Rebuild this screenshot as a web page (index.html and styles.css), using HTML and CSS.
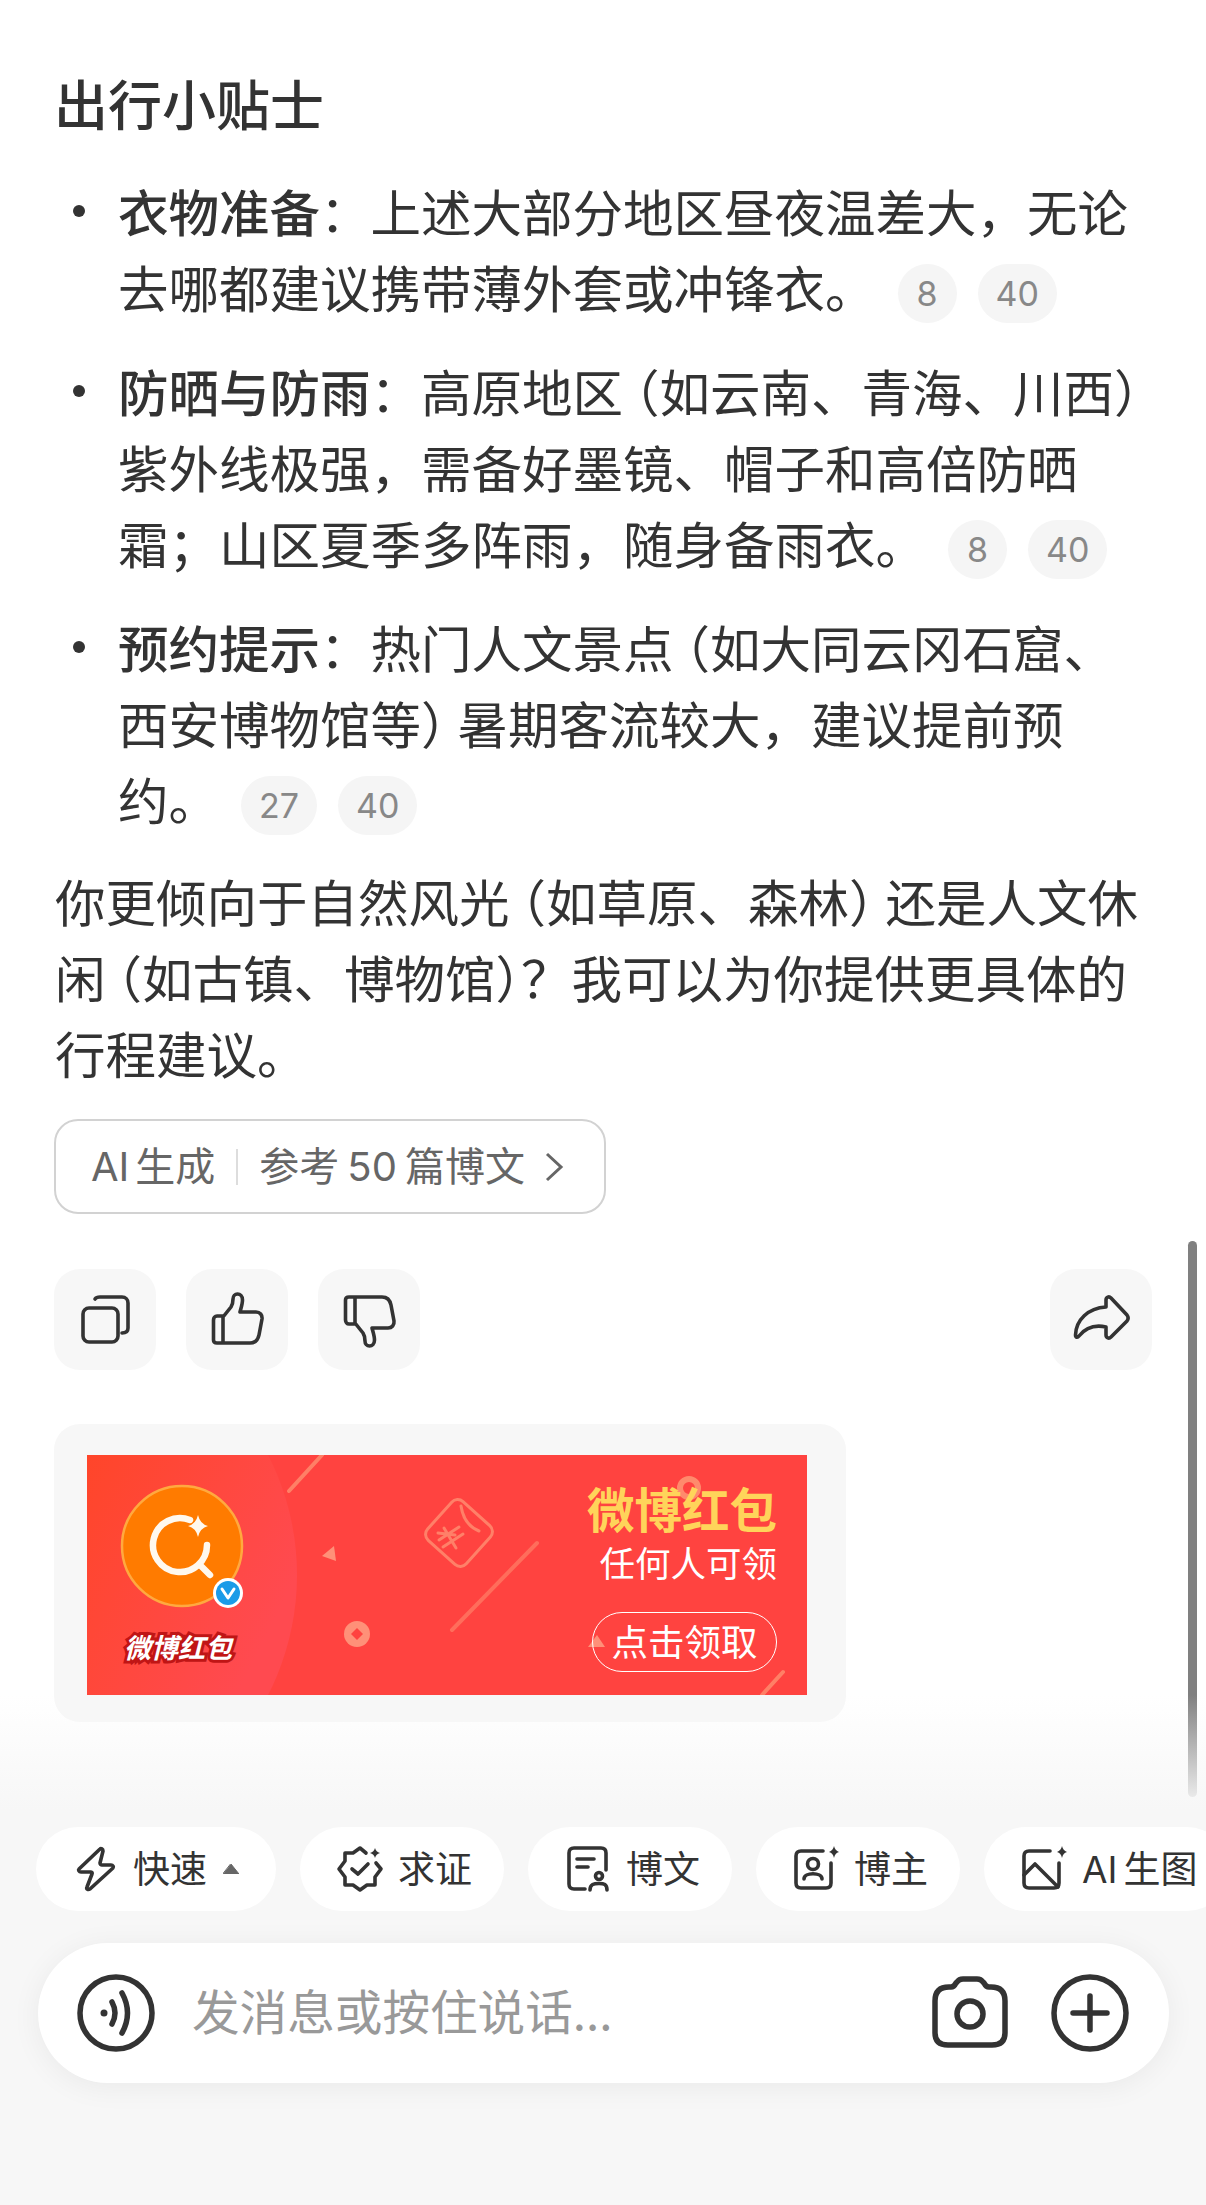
FILE: index.html
```html
<!DOCTYPE html>
<html lang="zh-CN">
<head>
    <meta charset="UTF-8">
    <meta name="viewport" content="width=device-width, initial-scale=1.0">
    <title>微博智搜</title>
    <link rel="stylesheet" href="styles.css">
</head>
<body>
    <div class="page">
        <main class="answer">
            <h2 class="tips-title">出行小贴士</h2>
            <ul class="tips">
                <li><b>衣物准备</b>：上述大部分地区昼夜温差大，无论去哪都建议携带薄外套或冲锋衣。<span class="cite first">8</span><span class="cite">40</span></li>
                <li><b>防晒与防雨</b>：高原地区<span class="lp">（</span>如云南、青海、川西<span class="rp">）</span><br>紫外线极强，需备好墨镜、帽子和高倍防晒霜；山区夏季多阵雨，随身备雨衣。<span class="cite first">8</span><span class="cite">40</span></li>
                <li><b>预约提示</b>：热门人文景点<span class="lp">（</span>如大同云冈石窟、<br>西安博物馆等<span class="rp">）</span>暑期客流较大，建议提前预<br>约。<span class="cite first">27</span><span class="cite">40</span></li>
            </ul>
            <p class="closing">你更倾向于自然风光<span class="lp">（</span>如草原、森林<span class="rp">）</span>还是人文休闲<span class="lp">（</span>如古镇、博物馆<span class="rp tight">）</span>？我可以为你提供更具体的行程建议。</p>

            <div class="source">
                <span class="source-ai">AI<i class="sp small"></i>生成</span>
                <span class="source-sep"></span>
                <span>参考<i class="sp"></i>50<i class="sp"></i>篇博文</span>
                <svg class="source-arrow" viewBox="0 0 20 32"><path d="M3 3 L17 16 L3 29"/></svg>
            </div>

            <div class="actions">
                <button class="action">
                    <svg viewBox="0 0 60 60"><rect x="8" y="18" width="35" height="34" rx="6"/><path d="M20 9 C21 7.5 23 7 25 7 H47 C50.5 7 53 9.5 53 13 V38 C53 41.5 51 43 47 43"/></svg>
                </button>
                <button class="action">
                    <svg viewBox="0 0 60 60"><path d="M16 53 V27 L24 17 C26 14 26 11 26 9 C26 6 28 4 30.5 4 C33 4 35.5 6 35.5 10 C35.5 14 34 18 33 22 H49 C53 22 55.5 25 55 29 L52 45 C51 50 48 53 43 53 H10 C8 53 6.5 52 6.5 50 V30 C6.5 28 8 26 10 26 H16"/></svg>
                </button>
                <button class="action">
                    <svg class="flip" viewBox="0 0 60 60"><path d="M16 53 V27 L24 17 C26 14 26 11 26 9 C26 6 28 4 30.5 4 C33 4 35.5 6 35.5 10 C35.5 14 34 18 33 22 H49 C53 22 55.5 25 55 29 L52 45 C51 50 48 53 43 53 H10 C8 53 6.5 52 6.5 50 V30 C6.5 28 8 26 10 26 H16"/></svg>
                </button>
                <button class="action share">
                    <svg viewBox="0 0 60 60"><path d="M35 10 C35 7 38 6 40 8 L56 25 C57.5 27 57.5 29 56 31 L40 47 C38 49 35 48 35 45 V37 C26 35 16 36 8 46 C6.5 48 4.5 47.5 4.5 45 C5 30 17 18 35 17 Z"/></svg>
                </button>
            </div>

            <div class="ad-card">
                <div class="banner">
                    <svg class="banner-art" viewBox="0 0 720 240">
                        <defs>
                            <linearGradient id="halo" x1="0" y1="0" x2="1" y2="0.5">
                                <stop offset="0" stop-color="#ff6148"/>
                                <stop offset="0.55" stop-color="#ff4526"/>
                                <stop offset="1" stop-color="#ff4a50"/>
                            </linearGradient>
                        </defs>
                        <circle cx="-53" cy="120" r="263" fill="url(#halo)"/>
                        <path d="M235 0 L202 36" class="deco-line"/>
                        <path d="M450 88 L365 175" class="deco-line faint"/>
                        <path d="M696 217 L675 240" class="deco-line"/>
                        <path d="M247 91 L235 101 L249 106 Z" class="deco-fill"/>
                        <path d="M501 192 L510 180 L518 192 Z" class="deco-fill"/>
                        <circle cx="270" cy="179" r="13" class="deco-fill"/>
                        <path d="M270 173 L276 179 L270 185 L264 179 Z" fill="#ff4340"/>
                        <circle cx="602" cy="33" r="9" fill="none" stroke="#ff8a6c" stroke-width="6"/>
                        <g class="packet">
                            <rect x="346" y="52" width="52" height="52" rx="8" transform="rotate(42 372 78)"/>
                            <path d="M374 51 C376 64 382 72 392 76"/>
                            <path d="M357 73 L369 93 M352 85 L372 72 M356 92 L376 79 M351 78 L368 80"/>
                        </g>
                        <circle cx="95" cy="91" r="60" fill="#ff7b00" stroke="#ffa93f" stroke-width="2.5"/>
                        <path d="M103 65 A27 27 0 1 0 120 90 M112 109 L123 120" fill="none" stroke="#fff8ee" stroke-width="6.5" stroke-linecap="round"/>
                        <path d="M111 60 Q113 69 121 71 Q113 73 111 82 Q109 73 101 71 Q109 69 111 60 Z" fill="#fff8ee"/>
                        <circle cx="141" cy="138" r="15" fill="#fff"/>
                        <circle cx="141" cy="138" r="12" fill="#1b9be8"/>
                        <path d="M135 134 L141 143 L147 134" fill="none" stroke="#fff" stroke-width="3" stroke-linecap="round" stroke-linejoin="round"/>
                    </svg>
                    <span class="banner-logo">微博红包</span>
                    <div class="banner-copy">
                        <span class="banner-title">微博红包</span>
                        <span class="banner-sub">任何人可领</span>
                        <span class="banner-btn">点击领取</span>
                    </div>
                </div>
            </div>
        </main>

        <div class="scrollbar"></div>

        <footer class="composer">
            <div class="chips">
                <div class="chip first">
                    <svg viewBox="0 0 48 48"><path d="M28 4 C29 3 31 4 31 6 L28 18 C28 19 29 20 30 20 H39 C41 20 42 22 41 23 L18 44 C16 45 14 44 15 42 L20 29 C20.5 28 20 27 19 27 H9 C7 27 6 25 7 24 Z"/></svg>
                    <span>快速</span>
                    <svg class="caret" viewBox="0 0 16 10"><path d="M8 0 L16 10 H0 Z"/></svg>
                </div>
                <div class="chip">
                    <svg viewBox="0 0 48 48"><path d="M30 8 L24 3 L17 8 L9 8 L9 16 L3 24 L9 32 L9 40 L17 40 L24 45 L31 40 L39 40 L39 32 L45 24 L40 18"/><path d="M16 24 L22 29 L32 19"/><path class="spark" d="M39 3 Q40 7 44 8 Q40 9 39 13 Q38 9 34 8 Q38 7 39 3 Z"/></svg>
                    <span>求证</span>
                </div>
                <div class="chip">
                    <svg viewBox="0 0 48 48"><path d="M21 44 H10 Q5 44 5 39 V8 Q5 3 10 3 H37 Q42 3 42 8 V25"/><path d="M13 14 H30 M13 22 H24"/><circle cx="35" cy="31" r="3.5"/><path d="M26 45 C26 39 30 38.500 35 38.500 C40 38.500 43 39 43 45"/></svg>
                    <span>博文</span>
                </div>
                <div class="chip">
                    <svg viewBox="0 0 48 48"><path d="M31 6 H9 Q4 6 4 11 V38 Q4 43 9 43 H34 Q39 43 39 38 V18"/><circle cx="21" cy="19" r="5.500"/><path d="M12 34 C12 27 30 27 30 34"/><path class="spark" d="M42 1 Q43 5.500 47 7 Q43 8 42 13 Q41 8 37 7 Q41 5.500 42 1 Z"/></svg>
                    <span>博主</span>
                </div>
                <div class="chip">
                    <svg viewBox="0 0 48 48"><path d="M30 6 H9 Q4 6 4 11 V38 Q4 43 9 43 H34 Q39 43 39 38 V18"/><path d="M4 30 L15 19 L38 42"/><path class="spark" d="M42 1 Q43 5.500 47 7 Q43 8 42 13 Q41 8 37 7 Q41 5.500 42 1 Z"/></svg>
                    <span>AI<i class="sp small"></i>生图</span>
                </div>
            </div>
            <div class="input-bar">
                <svg class="input-icon" viewBox="0 0 80 80"><circle cx="40" cy="40" r="36"/><circle class="dot" cx="28" cy="40" r="3.500"/><path d="M36 29 Q42 40 36 51 M46 20 Q57 40 46 60"/></svg>
                <span class="placeholder">发消息或按住说话...</span>
                <svg class="input-icon camera" viewBox="0 0 80 80"><path d="M5 28 Q5 14 19 14 H21 Q24 14 26 10 L27 9 Q29 6 33 6 H47 Q51 6 53 9 L54 10 Q56 14 59 14 H61 Q75 14 75 28 V60 Q75 72 62 72 H18 Q5 72 5 60 Z"/><circle cx="40" cy="41" r="13"/></svg>
                <svg class="input-icon" viewBox="0 0 80 80"><circle cx="40" cy="40" r="36"/><path d="M23 40 H57 M40 23 V57"/></svg>
            </div>
        </footer>
    </div>
</body>
</html>
```

FILE: styles.css
```css
* {
    margin: 0;
    padding: 0;
    box-sizing: border-box;
}

body {
    font-family: "Noto Sans CJK SC", "Noto Sans", sans-serif;
    background: #fff;
    color: #333;
}

.page {
    position: relative;
    width: 1206px;
    height: 2205px;
    overflow: hidden;
}

.sp {
    display: inline-block;
    width: 8px;
}

.sp.small {
    width: 6px;
}

.answer {
    padding: 65px 54px 0 54px;
    font-size: 50.5px;
    line-height: 76px;
}

.tips-title {
    font-size: 54px;
    font-weight: 500;
}

.tips {
    list-style: none;
    margin-top: 31px;
    width: 1114px;
}

.tips li {
    position: relative;
    padding-left: 64px;
    margin-bottom: 28px;
}

.tips li::before {
    content: "";
    position: absolute;
    left: 19px;
    top: 33px;
    width: 12px;
    height: 12px;
    border-radius: 50%;
    background: #333;
}

.tips b {
    font-weight: 500;
}

.lp {
    margin-left: -14px;
}

.rp {
    margin-right: -14px;
}

.rp.tight {
    margin-right: -25px;
}

.cite {
    display: inline-block;
    height: 59px;
    min-width: 59px;
    padding: 0 18px;
    margin-left: 21px;
    border-radius: 30px;
    background: #f5f5f5;
    color: #888;
    font-family: Inter, "Noto Sans CJK SC", sans-serif;
    font-size: 34px;
    line-height: 59px;
    text-align: center;
    vertical-align: 2px;
}

.cite.first {
    margin-left: 22px;
}

.closing {
    width: 1100px;
    margin: -2px 0 0 1px;
}

.source {
    display: inline-flex;
    align-items: center;
    width: 552px;
    height: 95px;
    margin-top: 29px;
    padding-left: 35px;
    border: 2px solid #d2d2d2;
    border-radius: 24px;
    color: #666;
    font-family: Inter, "Noto Sans CJK SC", sans-serif;
    font-size: 40px;
    line-height: 1;
}

.source-sep {
    width: 2px;
    height: 36px;
    margin: 0 21px;
    background: #ddd;
}

.source-arrow {
    width: 20px;
    height: 32px;
    margin-left: 19px;
    fill: none;
    stroke: #666;
    stroke-width: 3;
}

.actions {
    display: flex;
    gap: 30px;
    margin-top: 55px;
}

.action {
    display: flex;
    align-items: center;
    justify-content: center;
    width: 102px;
    height: 101px;
    border: none;
    border-radius: 26px;
    background: #f7f7f7;
}

.action svg {
    width: 60px;
    height: 60px;
    fill: none;
    stroke: #333;
    stroke-width: 3.6;
    stroke-linejoin: round;
    stroke-linecap: round;
}

.action svg.flip {
    transform: scaleY(-1);
}

.action.share {
    margin-left: auto;
}

.ad-card {
    width: 792px;
    height: 298px;
    margin-top: 54px;
    padding: 31px 33px;
    border-radius: 26px;
    background: #f7f7f7;
}

.banner {
    position: relative;
    width: 720px;
    height: 240px;
    background: #ff4340;
    overflow: hidden;
}

.banner-art {
    position: absolute;
    left: 0;
    top: 0;
    width: 720px;
    height: 240px;
}

.deco-line {
    fill: none;
    stroke: #ff7f66;
    stroke-width: 4;
    stroke-linecap: round;
}

.deco-line.faint {
    opacity: 0.7;
}

.deco-fill {
    fill: #ff9078;
}

.packet rect,
.packet path {
    fill: none;
    stroke: #ff8068;
    stroke-width: 3;
    stroke-linecap: round;
}

.banner-logo {
    position: absolute;
    left: 37px;
    top: 172px;
    color: #fff;
    font-size: 27px;
    font-weight: 700;
    line-height: 40px;
    font-style: italic;
    white-space: nowrap;
    -webkit-text-stroke: 6px #c01515;
    paint-order: stroke fill;
}

.banner-copy {
    position: absolute;
    right: 30px;
    top: 0;
    bottom: 0;
    display: flex;
    flex-direction: column;
    align-items: flex-end;
    color: #fff;
}

.banner-title {
    margin-top: 25px;
    color: #ffd45a;
    font-size: 47.5px;
    font-weight: 700;
    line-height: 56px;
}

.banner-sub {
    margin-top: 4px;
    font-size: 35.5px;
    line-height: 44px;
}

.banner-btn {
    width: 185px;
    height: 60px;
    margin-top: 28px;
    border: 1.5px solid #fff;
    border-radius: 30px;
    font-size: 36.5px;
    line-height: 56px;
    text-align: center;
}

.scrollbar {
    position: absolute;
    left: 1188px;
    top: 1241px;
    width: 9px;
    height: 556px;
    border-radius: 5px;
    background: #808080;
}

.composer {
    position: absolute;
    left: 0;
    right: 0;
    bottom: 0;
    height: 510px;
    padding: 132px 0 0 36px;
    background: linear-gradient(to bottom, rgba(247,247,247,0), #f7f7f7 115px);
}

.chips {
    display: flex;
    gap: 24px;
    white-space: nowrap;
}

.chip {
    display: flex;
    flex-shrink: 0;
    align-items: center;
    gap: 14px;
    height: 84px;
    padding: 0 32px 0 36px;
    border-radius: 42px;
    background: #fff;
    font-family: Inter, "Noto Sans CJK SC", sans-serif;
    font-size: 37px;
    line-height: 1;
}

.chip.first {
    gap: 13px;
    padding-right: 37px;
}

.chip svg {
    width: 48px;
    height: 48px;
    fill: none;
    stroke: #333;
    stroke-width: 3.6;
    stroke-linejoin: round;
    stroke-linecap: round;
}

.chip svg .spark {
    fill: #333;
    stroke: none;
}

.chip svg.caret {
    width: 16px;
    height: 10px;
    margin-left: 3px;
    fill: #666;
    stroke: #666;
    stroke-width: 1;
}

.input-bar {
    display: flex;
    align-items: center;
    width: 1131px;
    height: 140px;
    margin: 32px 0 0 2px;
    padding: 0 39px 0 38px;
    border-radius: 70px;
    background: #fff;
    box-shadow: 0 4px 30px rgba(0,0,0,0.06);
}

.input-icon {
    flex-shrink: 0;
    width: 80px;
    height: 80px;
    fill: none;
    stroke: #333;
    stroke-width: 5.5;
    stroke-linejoin: round;
    stroke-linecap: round;
}

.input-icon .dot {
    fill: #333;
    stroke: none;
}

.placeholder {
    flex: 1;
    margin: -6px 0 0 36px;
    color: #999;
    font-size: 47.6px;
    line-height: 1;
}

.camera {
    margin-right: 40px;
}
```
